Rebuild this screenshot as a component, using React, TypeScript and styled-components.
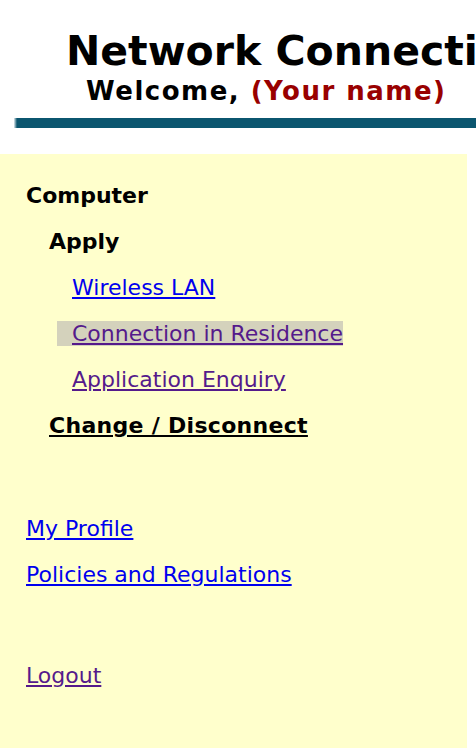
import styled, { createGlobalStyle } from "styled-components";

const GlobalStyle = createGlobalStyle`
  html, body {
    margin: 0;
    padding: 0;
    overflow: hidden;
    background: #ffffff;
  }
  body {
    font-family: "DejaVu Sans", Verdana, sans-serif;
  }
`;

const Page = styled.div`
  width: 476px;
  height: 748px;
  overflow: hidden;
  display: flex;
  flex-direction: column;
`;

const Header = styled.header`
  padding-top: 27px;
  white-space: nowrap;
  overflow: hidden;
`;

const Title = styled.h1`
  margin: 0;
  padding-left: 66px;
  font-size: 41px;
  line-height: 48px;
  font-weight: bold;
  color: #000;
`;

const Welcome = styled.div`
  padding-left: 86px;
  font-size: 26px;
  line-height: 32px;
  letter-spacing: 1.5px;
  font-weight: bold;
  color: #000;
`;

const Name = styled.span`
  color: #990000;
`;

const Rule = styled.div`
  margin: 11px 0 0 14px;
  height: 10px;
  background: linear-gradient(to right, #dfe8ec 0, #0b566f 3px, #0b566f 100%);
`;

const Sidebar = styled.nav`
  margin-top: 26px;
  width: 467px;
  flex: 1;
  background: #ffffcc;
  padding-top: 19px;
  box-sizing: border-box;
`;

const Group = styled.ul<{ $gap?: number }>`
  list-style: none;
  margin: 0 0 ${(p) => p.$gap ?? 0}px 0;
  padding: 0;
`;

const Row = styled.li<{ $indent: number }>`
  padding-left: ${(p) => p.$indent}px;
  font-size: 22px;
  line-height: 46px;
  white-space: nowrap;
`;

const Heading = styled.span`
  font-weight: bold;
  color: #000;
`;

const HeadingLink = styled.a`
  font-weight: bold;
  color: #000;
  letter-spacing: 0.3px;
  text-decoration: underline;
`;

const Link = styled.a<{ $visited?: boolean }>`
  color: ${(p) => (p.$visited ? "#551a8b" : "#0000ee")};
  text-decoration: underline;
`;

const Current = styled.span`
  background: #d4d2bc;
  padding-left: 15px;
`;

export default function App() {
  return (
    <Page>
      <GlobalStyle />
      <Header>
        <Title>Network Connection</Title>
        <Welcome>
          Welcome, <Name>(Your name)</Name>
        </Welcome>
      </Header>
      <Rule />
      <Sidebar>
        <Group $gap={57}>
          <Row $indent={26}>
            <Heading>Computer</Heading>
          </Row>
          <Row $indent={49}>
            <Heading>Apply</Heading>
          </Row>
          <Row $indent={72}>
            <Link href="#wlan">Wireless LAN</Link>
          </Row>
          <Row $indent={57}>
            <Current>
              <Link href="#residence" $visited>
                Connection in Residence
              </Link>
            </Current>
          </Row>
          <Row $indent={72}>
            <Link href="#enquiry" $visited>
              Application Enquiry
            </Link>
          </Row>
          <Row $indent={49}>
            <HeadingLink href="#change">Change / Disconnect</HeadingLink>
          </Row>
        </Group>
        <Group $gap={55}>
          <Row $indent={26}>
            <Link href="#profile">My Profile</Link>
          </Row>
          <Row $indent={26}>
            <Link href="#policies">Policies and Regulations</Link>
          </Row>
        </Group>
        <Group>
          <Row $indent={26}>
            <Link href="#logout" $visited>
              Logout
            </Link>
          </Row>
        </Group>
      </Sidebar>
    </Page>
  );
}
